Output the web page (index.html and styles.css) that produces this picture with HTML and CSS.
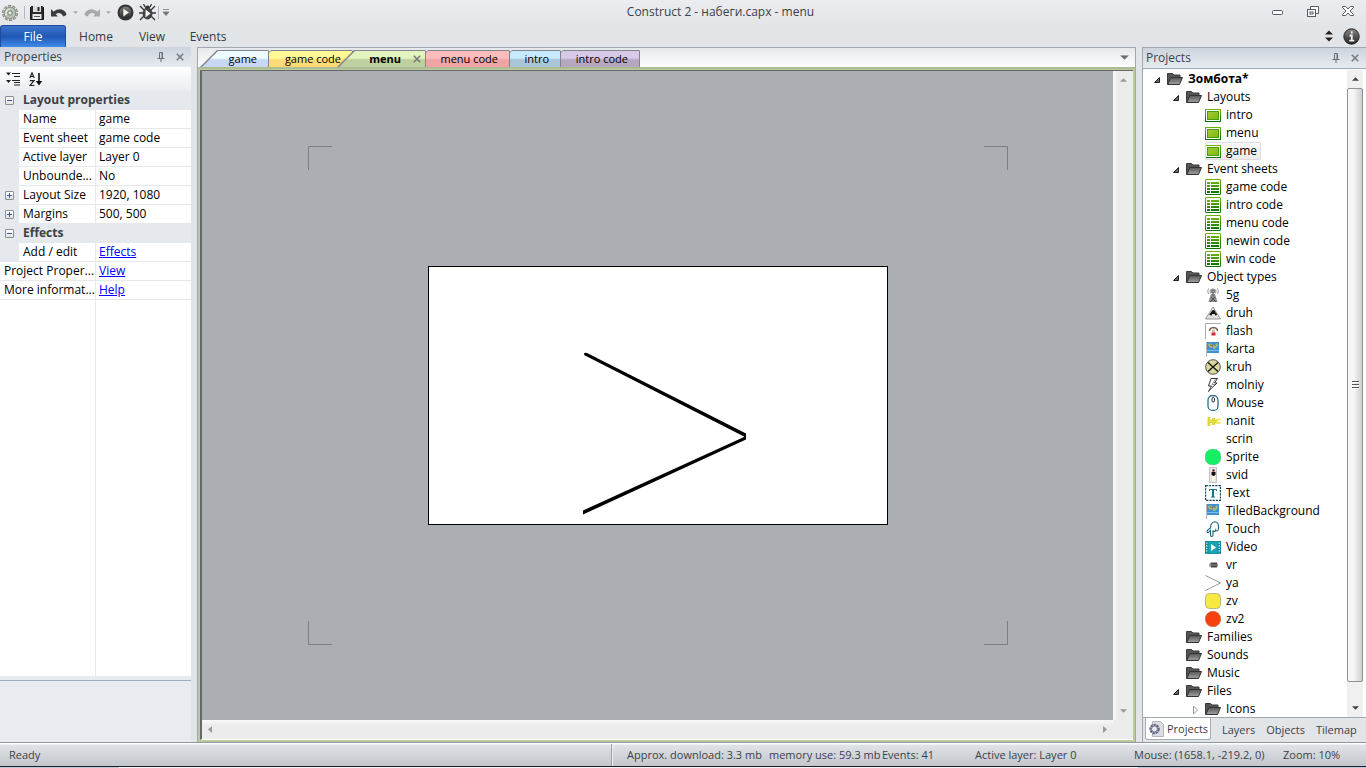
FILE: index.html
```
<!DOCTYPE html>
<html lang="en">
<head>
<meta charset="utf-8">
<title>Construct 2 - набеги.capx - menu</title>
<link rel="stylesheet" href="styles.css">
</head>
<body>
<svg class="defs" aria-hidden="true">
  <defs>
    <linearGradient id="dk" x1="0" y1="0" x2="0" y2="1"><stop offset="0" stop-color="#888"/><stop offset="1" stop-color="#222"/></linearGradient>
    <linearGradient id="gn" x1="0" y1="0" x2="0" y2="1"><stop offset="0" stop-color="#6db00a"/><stop offset="1" stop-color="#087408"/></linearGradient>
    <linearGradient id="lime" x1="0" y1="0" x2="1" y2="1"><stop offset="0" stop-color="#a2cc40"/><stop offset="1" stop-color="#7fb804"/></linearGradient>
    <linearGradient id="fold" x1="0" y1="0" x2="0" y2="1"><stop offset="0" stop-color="#555"/><stop offset="1" stop-color="#a2a2a2"/></linearGradient>
  </defs>
  <symbol id="i-folder" viewBox="0 0 16 16"><path d="M.5 13.500V2.500h5l1.500 1.500h6v2.500" fill="#555" stroke="#3a3a3a"/><path d="M.8 13.500L3.800 6.500H15.500L12.500 13.500z" fill="url(#fold)" stroke="#333"/></symbol>
  <symbol id="i-layout" viewBox="0 0 16 16"><rect x=".5" y="2.500" width="15" height="12" fill="#fff" stroke="url(#gn)"/><rect x="2.500" y="4.500" width="11" height="8" fill="url(#lime)" stroke="#4c9a10"/></symbol>
  <symbol id="i-sheet" viewBox="0 0 16 16"><rect x=".5" y=".5" width="15" height="15" rx=".5" fill="#fff" stroke="url(#gn)"/><path d="M2 3h3v2H2zM6 3h8v2H6zM2 6h3v2H2zM6 6h8v2H6zM2 9h3v2H2zM6 9h8v2H6zM2 12h3v2H2zM6 12h8v2H6z" fill="url(#gn)"/></symbol>
  <symbol id="i-exp" viewBox="0 0 8 10"><path d="M6.500 3.500v5h-5z" fill="#666" stroke="#222"/></symbol>
  <symbol id="i-col" viewBox="0 0 8 10"><path d="M2.500 2l4 4-4 4z" fill="#fff" stroke="#999"/></symbol>
  <symbol id="i-5g" viewBox="0 0 16 16"><path d="M6 7L3.500 15h9L10 7z" fill="#8b8b8b"/><path d="M5 15l5-5M11 15l-5-5" stroke="#555"/><path d="M3.500 1.500q-1.500 3 0 5.500M5.500 2.500q-1 2 0 4M10.500 2.500q1 2 0 4M12.500 1.500q1.500 3 0 5.500" fill="none" stroke="#999"/><circle cx="8" cy="4" r="2.500" fill="#888"/><path d="M8 5v4" stroke="#666"/></symbol>
  <symbol id="i-druh" viewBox="0 0 16 16"><path d="M8 2L15.500 14H.5z" fill="#ddd" stroke="#999"/><path d="M4.500 10q0-2 1.500-2.500Q6.500 5 8.500 5q2 0 2 2.500 1.500.5 1.500 2.500l-2 .5V9H7v1.500z" fill="#111"/></symbol>
  <symbol id="i-flash" viewBox="0 0 16 16"><path d="M.5 16V.5H16" fill="none" stroke="#aaa"/><path d="M4.500 8q0-3 4-3.500Q12.500 5 12.500 8" fill="none" stroke="#75685a" stroke-width="1.500"/><rect x="7" y="6.500" width="3" height="3" fill="#d8bfa5"/><rect x="6.500" y="9.500" width="4" height="3" fill="#e02535"/></symbol>
  <symbol id="i-map" viewBox="0 0 16 16"><path d="M1.500 1v15" stroke="#bbb"/><rect x="2" y="1" width="12" height="11" fill="#3e91cf"/><path d="M2 9.500h12" stroke="#7fbbe8"/><path d="M3 3l3-.5 2 2-1 2.500-3-1zM8 5l4-3 1 2-2 3.500-3 .5z" fill="#a8b777"/><path d="M5 4l3 1M9 3.500l2 1" stroke="#a45c4c"/></symbol>
  <symbol id="i-kruh" viewBox="0 0 16 16"><circle cx="8" cy="8" r="7.300" fill="#dad89c" stroke="#555"/><path d="M3 3.500l10 9M13 3.500l-10 9" stroke="#111" stroke-width="1.300"/></symbol>
  <symbol id="i-bolt" viewBox="0 0 16 16"><path d="M6 1.500h6.500L9.500 6H12L3.500 14.500 6.500 9H3.500z" fill="#fff" stroke="#333"/><path d="M10.500 2L7 7.500h3L4.500 13.500" fill="none" stroke="#777" stroke-width=".8"/></symbol>
  <symbol id="i-mouse" viewBox="0 0 16 16"><rect x="3" y=".6" width="10" height="14.800" rx="4.500" fill="#fff" stroke="#1b6477" stroke-width="1.200"/><rect x="7" y="2.500" width="2.500" height="4.500" rx="1.200" fill="#fff" stroke="#123"/></symbol>
  <symbol id="i-nanit" viewBox="0 0 16 16"><path d="M4 4v9M8.500 5v7M4 8.500h8" stroke="#bdb92e" stroke-width="2.600"/><path d="M4 4v9M8.500 5v7M4 8.500h8M15.500 6.500H12v3.500h3.500" fill="none" stroke="#f0e62a" stroke-width="1.400"/></symbol>
  <symbol id="i-green" viewBox="0 0 16 16"><rect x=".3" y=".3" width="15.400" height="15.400" rx="6.500" fill="#14ef65" stroke="#47c878" stroke-width=".6"/></symbol>
  <symbol id="i-svid" viewBox="0 0 16 16"><rect x="4.500" y=".5" width="7" height="15" fill="#e6e6e6" stroke="#c4c4c4"/><circle cx="8.500" cy="3.500" r="1.300" fill="#722"/><path d="M6.500 5h4v3l-2 1-2-1z" fill="#111"/><rect x="7" y="9" width="3" height="5" fill="#fff3dd"/></symbol>
  <symbol id="i-text" viewBox="0 0 16 16"><rect x=".6" y=".6" width="14.800" height="14.800" fill="#fff" stroke="#14465a" stroke-width="1.200" stroke-dasharray="2.200 1"/><path d="M4.500 6V4.500h7V6" fill="none" stroke="#16788c"/><path d="M8 4v8" stroke="#16788c" stroke-width="2"/><path d="M6 12h4" stroke="#16788c"/></symbol>
  <symbol id="i-touch" viewBox="0 0 16 16"><path d="M5.500 7L6 3.500Q7.500 .8 10 .8q3.500.2 3.500 4.700V8q-.3 2-1.500 2-1 0-1.200-1-.5 1.500-1.500 1.500-1 0-1.300-1V14q-.3 1.500-1.300 1.500-1.200 0-1.200-1.500V9.500L3.500 11.300q-1.500.5-1.500-1 .5-1.800 3.500-3.300z" fill="#fff" stroke="#1b6477" stroke-width="1.100"/></symbol>
  <symbol id="i-video" viewBox="0 0 16 16"><rect y="2" width="16" height="13" fill="#10879a"/><rect x="3.500" y="2.500" width="9" height="12" fill="#1ba3b3"/><path d="M1.700 3.500v11M14.300 3.500v11" stroke="#d5f3f5" stroke-width="1.400" stroke-dasharray="1.300 1.300"/><path d="M6 5l5 3.500L6 12z" fill="#fff"/></symbol>
  <symbol id="i-vr" viewBox="0 0 16 16"><rect x="4" y="5.500" width="9" height="5" rx="2" fill="#aaa"/><path d="M6 6.500h6M5.500 8h7M6 9.500h6" stroke="#333" stroke-width=".9"/><path d="M7 5v6M9 5v6M11 5v6" stroke="#555" stroke-width=".8"/></symbol>
  <symbol id="i-ya" viewBox="0 0 16 16"><path d="M.5 .5L15.500 8 .5 15.500" fill="none" stroke="#999"/></symbol>
  <symbol id="i-zv" viewBox="0 0 16 16"><rect x=".5" y=".5" width="15" height="15" rx="4" fill="#f6ea42" stroke="#bbb687"/></symbol>
  <symbol id="i-zv2" viewBox="0 0 16 16"><circle cx="8" cy="8" r="7.700" fill="#f5410e" stroke="#c85a35" stroke-width=".6"/></symbol>
  <symbol id="i-gear" viewBox="0 0 16 16"><circle cx="8" cy="8" r="6.800" fill="none" stroke="#737c70" stroke-width="2.400" stroke-dasharray="3 1.270"/><circle cx="8" cy="8" r="6.600" fill="none" stroke="#b3bcae" stroke-width="1.400" stroke-dasharray="2.400 1.750"/><circle cx="8" cy="8" r="5.800" fill="#b9c1b3" stroke="#7f887b" stroke-width=".8"/><path d="M4 10.500Q3 5 8 4" fill="none" stroke="#e1e6dc" stroke-width="1.500"/><circle cx="8" cy="8" r="2.200" fill="#e6e8e9" stroke="#737c70"/></symbol>
  <symbol id="i-pin" viewBox="0 0 8 10"><path d="M2.500 6V.5h3V6M.5 6.500h7M4 7v3M5 1v5" fill="none" stroke="#6a6e74"/></symbol>
  <symbol id="i-x" viewBox="0 0 8 8"><path d="M.8 .8l6.400 6.400M7.200 .8L.8 7.200" fill="none" stroke="#777b80" stroke-width="1.600"/></symbol>
  <symbol id="i-up" viewBox="0 0 8 4"><path d="M0 4l4-4 4 4z" fill="currentColor"/></symbol>
  <symbol id="i-down" viewBox="0 0 8 4"><path d="M0 0h8L4 4z" fill="currentColor"/></symbol>
</svg>

<header class="titlebar">
  <div class="quick">
    <svg class="logo" viewBox="0 0 16 16"><use href="#i-gear"/></svg>
    <span class="bar"></span>
    <button class="tool" aria-label="Save"><svg width="16" height="16" viewBox="0 0 16 16"><path d="M1.500 2.500l1-1h11l1 1v12h-13z" fill="#2b2b2b" stroke="#151515"/><rect x="4" y="1" width="8" height="6" fill="#ddd"/><rect x="8.500" y="2" width="2" height="4" fill="#222"/><rect x="3.500" y="9" width="9" height="5" fill="#e8e8e8"/><path d="M5 11.500h6" stroke="#555"/></svg></button>
    <button class="tool undo" aria-label="Undo"><svg width="16" height="12" viewBox="0 0 16 12"><path d="M0 2v7.500h7L4.800 7.300Q9 4 12.500 9.500 16.500 8.500 15 6 10.500-.5 2.500 4.500z" fill="#3c3c3c"/></svg></button>
    <button class="arrow" aria-label="Undo history"><svg width="5" height="3" viewBox="0 0 8 4"><use href="#i-down"/></svg></button>
    <button class="tool redo" aria-label="Redo"><svg width="16" height="12" viewBox="0 0 16 12"><path d="M16 2v7.500H9l2.200-2.200Q7 4 3.500 9.500-.5 8.500 1 6 5.500-.5 13.500 4.500z" fill="#a6a8aa"/></svg></button>
    <button class="arrow" aria-label="Redo history"><svg width="5" height="3" viewBox="0 0 8 4"><use href="#i-down"/></svg></button>
    <button class="tool run" aria-label="Run layout"><svg width="17" height="17" viewBox="0 0 17 17"><circle cx="8.500" cy="8.500" r="7" fill="url(#dk)" stroke="#333" stroke-width="2"/><path d="M6 4L12.500 8.500 6 13z" fill="#f4f4f4" stroke="#333" stroke-width=".5"/></svg></button>
    <button class="tool bug" aria-label="Debug layout"><svg width="17" height="17" viewBox="0 0 17 17"><path d="M1 2l4 4M16 2l-4 4M0 9h4M17 9h-4M1 16l4-4M16 16l-4-4M6 3L4.500 0M11 3l1.500-3" stroke="#333" stroke-width="1.300"/><circle cx="8.500" cy="4" r="2.500" fill="#333"/><ellipse cx="8.500" cy="9.500" rx="5" ry="6" fill="#444"/><path d="M6.500 5.500l5 4-5 4z" fill="#f4f4f4"/></svg></button>
    <span class="bar"></span>
    <button class="arrow more" aria-label="Customize toolbar"><svg width="6" height="7" viewBox="0 0 6 7"><path d="M0 .5h6M0 3h6L3 6.500z" fill="#777" stroke="#777" stroke-width=".8"/></svg></button>
  </div>
  <h1 class="title">Construct 2 - набеги.capx - menu</h1>
  <div class="winctl">
    <button aria-label="Minimize"><svg width="12" height="12" viewBox="0 0 12 12"><rect x=".5" y="4.500" width="10" height="4" rx="1" fill="#fff" stroke="#555a66"/></svg></button>
    <button aria-label="Restore"><svg width="12" height="12" viewBox="0 0 12 12"><path d="M3.500 3.500v-3h8v7h-3" fill="#fff" stroke="#555a66"/><rect x=".5" y="3.500" width="8" height="7" fill="#fff" stroke="#555a66"/><rect x="3" y="6" width="3" height="2" fill="none" stroke="#555a66"/></svg></button>
    <button aria-label="Close"><svg width="12" height="10" viewBox="0 0 12 10"><path d="M.5 .5h3.200L6 3 8.300.5h3.200v1L8 5l3.500 3.500v1H8.300L6 7 3.700 9.500H.5v-1L4 5 .5 1.500z" fill="#fff" stroke="#555a66"/></svg></button>
  </div>
</header>

<nav class="ribbon">
  <button class="file">File</button>
  <button class="rtab">Home</button>
  <button class="rtab">View</button>
  <button class="rtab">Events</button>
  <div class="ribbon-right">
    <button aria-label="Minimize ribbon"><svg width="8" height="12" viewBox="0 0 8 12"><path d="M0 4.500L4 .5l4 4zM0 7.500h8l-4 4z" fill="#222"/></svg></button>
    <button aria-label="About"><svg width="17" height="17" viewBox="0 0 17 17"><circle cx="8.500" cy="8.500" r="7.700" fill="url(#dk)" stroke="#222"/><path d="M8.800 3.300v2.200M6.500 7.500h2.300v5M6.300 12.700h5" fill="none" stroke="#eee" stroke-width="1.800"/></svg></button>
  </div>
</nav>

<main class="workspace">
  <section class="panel props">
    <div class="panel-head"><h2>Properties</h2>
      <button aria-label="Pin"><svg width="8" height="10"><use href="#i-pin"/></svg></button>
      <button aria-label="Close panel"><svg width="8" height="8"><use href="#i-x"/></svg></button></div>
    <div class="props-tools">
      <button aria-label="Categorized"><svg width="15" height="14" viewBox="0 0 15 14"><path d="M0 .5h5L2.500 3.500zM0 8h5l-2.500 3z" fill="#222"/><path d="M6 1.500h8M8 4.500h6M6 8.500h8M8 10.500h6M8 13h6" stroke="#222"/></svg></button>
      <button aria-label="Sort alphabetically"><svg width="14" height="15" viewBox="0 0 14 15"><path d="M.8 6L3 .8 5.200 6M1.500 4.500h3M.8 8.700h4.200L1 13.500h4.500" fill="none" stroke="#222" stroke-width="1.200"/><path d="M10 1v10" stroke="#111" stroke-width="1.600"/><path d="M6.800 9h6.400L10 13.500z" fill="#111"/></svg></button>
    </div>
    <div class="grid-area">
      <table class="grid">
        <colgroup><col class="c-gut"><col class="c-name"><col></colgroup>
        <tr class="cat"><td><button class="box" aria-label="Collapse"></button></td><th colspan="2">Layout properties</th></tr>
        <tr><td></td><th>Name</th><td>game</td></tr>
        <tr><td></td><th>Event sheet</th><td>game code</td></tr>
        <tr><td></td><th>Active layer</th><td>Layer 0</td></tr>
        <tr><td></td><th>Unbounde...</th><td>No</td></tr>
        <tr><td><button class="box plus" aria-label="Expand"></button></td><th>Layout Size</th><td>1920, 1080</td></tr>
        <tr><td><button class="box plus" aria-label="Expand"></button></td><th>Margins</th><td>500, 500</td></tr>
        <tr class="cat"><td><button class="box" aria-label="Collapse"></button></td><th colspan="2">Effects</th></tr>
        <tr><td></td><th>Add / edit</th><td><a href="#">Effects</a></td></tr>
        <tr><th class="wide" colspan="2">Project Proper...</th><td><a href="#">View</a></td></tr>
        <tr><th class="wide" colspan="2">More informat...</th><td><a href="#">Help</a></td></tr>
      </table>
      <div class="grid-rest"></div>
    </div>
    <div class="desc"></div>
  </section>

  <section class="docs">
    <div class="tabs">
      <div class="tab slant t-game"><button>game</button></div>
      <div class="tab t-gcode"><button>game code</button></div>
      <div class="tab slant t-menu"><button>menu</button><button class="close" aria-label="Close tab"><svg width="8" height="8"><use href="#i-x"/></svg></button></div>
      <div class="tab t-mcode"><button>menu code</button></div>
      <div class="tab t-intro"><button>intro</button></div>
      <div class="tab t-icode"><button>intro code</button></div>
      <button class="tablist" aria-label="Tab list"><svg width="9" height="5" viewBox="0 0 8 4"><use href="#i-down"/></svg></button>
    </div>
    <div class="frame">
      <div class="view">
        <div class="canvas">
          <svg width="700" height="499" viewBox="0 0 700 499">
            <path d="M.5 24V.5H24M676 .5h23.500V24M.5 475v23.500H24M676 498.500h23.500V475" fill="none" stroke="#7b7e82"/>
            <rect x="120.500" y="120.500" width="459" height="258" fill="#fff" stroke="#000"/>
            <path d="M278 208.500L437 290.500L276 366.500" fill="none" stroke="none"/>
            <path d="M276 208q.5-2 3-1L438 287.500v6L275 368.500v-4L436 291v-.5L277 209.500q-1-.5-1-1.500z" fill="#000"/>
          </svg>
        </div>
        <div class="sb sb-v"><button aria-label="Scroll up"><svg width="7" height="4"><use href="#i-up"/></svg></button><button aria-label="Scroll down"><svg width="7" height="4"><use href="#i-down"/></svg></button></div>
        <div class="sb sb-h"><button aria-label="Scroll left"><svg width="4" height="7" viewBox="0 0 4 7"><path d="M4 0v7L0 3.500z" fill="currentColor"/></svg></button><button aria-label="Scroll right"><svg width="4" height="7" viewBox="0 0 4 7"><path d="M0 0v7l4-3.500z" fill="currentColor"/></svg></button></div>
        <div class="sb"></div>
      </div>
    </div>
  </section>

  <section class="panel projects">
    <div class="panel-head"><h2>Projects</h2>
      <button aria-label="Pin"><svg width="8" height="10"><use href="#i-pin"/></svg></button>
      <button aria-label="Close panel"><svg width="8" height="8"><use href="#i-x"/></svg></button></div>
    <div class="tree-box">
      <ul class="tree">
        <li><span class="row"><svg class="ex"><use href="#i-exp"/></svg><svg class="ic"><use href="#i-folder"/></svg><b>Зомбота*</b></span>
          <ul>
            <li><span class="row"><svg class="ex"><use href="#i-exp"/></svg><svg class="ic"><use href="#i-folder"/></svg><span>Layouts</span></span>
              <ul>
                <li><span class="row"><svg class="ic"><use href="#i-layout"/></svg><span>intro</span></span></li>
                <li><span class="row"><svg class="ic"><use href="#i-layout"/></svg><span>menu</span></span></li>
                <li><span class="row sel"><svg class="ic"><use href="#i-layout"/></svg><span>game</span></span></li>
              </ul></li>
            <li><span class="row"><svg class="ex"><use href="#i-exp"/></svg><svg class="ic"><use href="#i-folder"/></svg><span>Event sheets</span></span>
              <ul>
                <li><span class="row"><svg class="ic"><use href="#i-sheet"/></svg><span>game code</span></span></li>
                <li><span class="row"><svg class="ic"><use href="#i-sheet"/></svg><span>intro code</span></span></li>
                <li><span class="row"><svg class="ic"><use href="#i-sheet"/></svg><span>menu code</span></span></li>
                <li><span class="row"><svg class="ic"><use href="#i-sheet"/></svg><span>newin code</span></span></li>
                <li><span class="row"><svg class="ic"><use href="#i-sheet"/></svg><span>win code</span></span></li>
              </ul></li>
            <li><span class="row"><svg class="ex"><use href="#i-exp"/></svg><svg class="ic"><use href="#i-folder"/></svg><span>Object types</span></span>
              <ul>
                <li><span class="row"><svg class="ic"><use href="#i-5g"/></svg><span>5g</span></span></li>
                <li><span class="row"><svg class="ic"><use href="#i-druh"/></svg><span>druh</span></span></li>
                <li><span class="row"><svg class="ic"><use href="#i-flash"/></svg><span>flash</span></span></li>
                <li><span class="row"><svg class="ic"><use href="#i-map"/></svg><span>karta</span></span></li>
                <li><span class="row"><svg class="ic"><use href="#i-kruh"/></svg><span>kruh</span></span></li>
                <li><span class="row"><svg class="ic"><use href="#i-bolt"/></svg><span>molniy</span></span></li>
                <li><span class="row"><svg class="ic"><use href="#i-mouse"/></svg><span>Mouse</span></span></li>
                <li><span class="row"><svg class="ic"><use href="#i-nanit"/></svg><span>nanit</span></span></li>
                <li><span class="row"><svg class="ic"></svg><span>scrin</span></span></li>
                <li><span class="row"><svg class="ic"><use href="#i-green"/></svg><span>Sprite</span></span></li>
                <li><span class="row"><svg class="ic"><use href="#i-svid"/></svg><span>svid</span></span></li>
                <li><span class="row"><svg class="ic"><use href="#i-text"/></svg><span>Text</span></span></li>
                <li><span class="row"><svg class="ic"><use href="#i-map"/></svg><span>TiledBackground</span></span></li>
                <li><span class="row"><svg class="ic"><use href="#i-touch"/></svg><span>Touch</span></span></li>
                <li><span class="row"><svg class="ic"><use href="#i-video"/></svg><span>Video</span></span></li>
                <li><span class="row"><svg class="ic"><use href="#i-vr"/></svg><span>vr</span></span></li>
                <li><span class="row"><svg class="ic"><use href="#i-ya"/></svg><span>ya</span></span></li>
                <li><span class="row"><svg class="ic"><use href="#i-zv"/></svg><span>zv</span></span></li>
                <li><span class="row"><svg class="ic"><use href="#i-zv2"/></svg><span>zv2</span></span></li>
              </ul></li>
            <li><span class="row"><svg class="ex"></svg><svg class="ic"><use href="#i-folder"/></svg><span>Families</span></span></li>
            <li><span class="row"><svg class="ex"></svg><svg class="ic"><use href="#i-folder"/></svg><span>Sounds</span></span></li>
            <li><span class="row"><svg class="ex"></svg><svg class="ic"><use href="#i-folder"/></svg><span>Music</span></span></li>
            <li><span class="row"><svg class="ex"><use href="#i-exp"/></svg><svg class="ic"><use href="#i-folder"/></svg><span>Files</span></span>
              <ul class="files"><li><span class="row"><svg class="ex"><use href="#i-col"/></svg><svg class="ic"><use href="#i-folder"/></svg><span>Icons</span></span></li></ul></li>
          </ul></li>
      </ul>
      <div class="tree-sb">
        <button aria-label="Scroll up"><svg width="7" height="4"><use href="#i-up"/></svg></button>
        <div class="thumb"><i></i><i></i><i></i></div>
        <button aria-label="Scroll down"><svg width="7" height="4"><use href="#i-down"/></svg></button>
      </div>
    </div>
    <div class="ptabs">
      <button class="on"><svg width="16" height="16" viewBox="0 0 16 16"><path d="M4.500 .5h8l3 3v12h-11z" fill="#dcdde4" stroke="#b5b5bd"/><circle cx="6.500" cy="8" r="4" fill="#e9e9f2" stroke="#62647e" stroke-width="2.500" stroke-dasharray="2.200 .7"/><circle cx="6.500" cy="8" r="3" fill="none" stroke="#80829c"/></svg>Projects</button>
      <button>Layers</button><button>Objects</button><button>Tilemap</button>
    </div>
  </section>
</main>

<footer class="status">
  <span class="ready">Ready</span>
  <div class="stats"><span class="s1">Approx. download: 3.3 mb</span><span class="s2">memory use: 59.3 mb</span><span class="s3">Events: 41</span><span class="s4">Active layer: Layer 0</span><span class="s5">Mouse: (1658.1, -219.2, 0)</span><span>Zoom: 10%</span></div>
</footer>
<div class="edge"></div>
</body>
</html>
```
FILE: styles.css
```
* { box-sizing: border-box; }
body {
  margin: 0;
  height: 100vh;
  display: flex;
  flex-direction: column;
  overflow: hidden;
  background: #e1e5e8;
  color: #000;
  font: 12px/18px "Open Sans", "Noto Sans", sans-serif;
  white-space: nowrap;
}
button { margin: 0; padding: 0; border: 0; background: none; color: inherit; font: inherit; }
svg { display: block; flex: none; }
.defs { position: absolute; width: 0; height: 0; }
h1, h2 { margin: 0; font: inherit; }

/* Title bar */
.titlebar { height: 25px; display: flex; align-items: center; background: linear-gradient(#ebecef, #e3e6e9); color: #3b3f48; }
.quick { display: flex; align-items: center; padding-left: 2px; height: 22px; }
.logo { width: 16px; height: 16px; }
.bar { width: 1px; height: 13px; margin: 0 4px 0 6px; background: #b4b8bc; }
.tool { display: flex; }
.undo, .redo { margin-left: 6px; }
.arrow { margin-left: 6px; color: #9a9da1; }
.run { margin-left: 6px; }
.bug { margin-left: 5px; }
.bug + .bar { margin: 0 0 0 2px; }
.more { margin-left: 4px; }
.title { flex: 1; text-align: center; line-height: 20px; height: 22px; }
.winctl { display: flex; gap: 23px; padding-right: 12px; height: 22px; align-items: flex-start; padding-top: 4px; }

/* Ribbon */
.ribbon { height: 22px; display: flex; align-items: stretch; color: #35383e; }
.file { width: 66px; border-radius: 3px 3px 0 0; border: 1px solid #1f4c9c; border-bottom: 0; background: linear-gradient(#3c74cd, #2158b4 50%, #3f8aea); color: #fff; }
.rtab { margin-left: 15px; width: 30px; display: flex; align-items: center; justify-content: center; padding-top: 2px; }
.rtab + .rtab { margin-left: 26px; }
.ribbon-right { margin-left: auto; display: flex; align-items: center; gap: 10px; padding-right: 6px; }

/* Workspace */
.workspace { flex: 1; min-height: 0; display: grid; grid-template-columns: 191px minmax(0, 1fr) 224px; gap: 6px; }
.panel { display: flex; flex-direction: column; min-height: 0; }
.panel-head { height: 20px; display: flex; align-items: center; padding: 0 7px 0 4px; background: linear-gradient(#cdd4dc, #e6ebf0); color: #3b4350; }
.panel-head h2 { flex: 1; }
.panel-head button + button { margin-left: 11px; }
.props-tools { height: 24px; display: flex; align-items: center; gap: 8px; padding-left: 6px; background: linear-gradient(#fff, #e9ecf1); }
.grid-area { flex: 1; min-height: 0; display: flex; flex-direction: column; }
.grid { width: 100%; table-layout: fixed; border-collapse: separate; border-spacing: 0; }
.c-gut { width: 19px; }
.c-name { width: 77px; }
.grid tr { height: 19px; }
.grid td, .grid th { padding: 0 3px 0 4px; line-height: 18px; font-weight: normal; text-align: left; background: #fff; border-bottom: 1px solid #e5e8ed; }
.grid td:last-child { padding-left: 3px; }
.grid th { border-right: 1px solid #e5e8ed; }
.grid td:first-child { background: #e5e8ed; padding-left: 5px; }
.grid .cat th { font-weight: bold; background: #e5e8ed; color: #3c3f45; }
.grid a { color: #00f; }
.box { position: relative; display: block; width: 9px; height: 9px; border: 1px solid #8b9097; border-radius: 1px; background: linear-gradient(#fff, #e2e2e2); }
.box::before, .plus::after { content: ""; position: absolute; left: 1px; top: 3px; width: 5px; height: 1px; background: #3c5a9c; }
.plus::after { left: 3px; top: 1px; width: 1px; height: 5px; }
.grid-rest { flex: 1; background: linear-gradient(#e5e8ed, #e5e8ed) 95px 0 / 1px 100% no-repeat #fff; }
.desc { height: 66px; border-top: 4px solid #e8ebf0; background: #e8ebf0; box-shadow: inset 0 1px #a0acba; }

/* Document area */
.docs { display: flex; flex-direction: column; min-width: 0; border: 1px solid #9fa7b0; border-bottom: 0; }
.tabs { height: 19px; display: flex; align-items: flex-end; padding-left: 2px; background: linear-gradient(#e6e9ec, #fdfdfd); font-size: 11px; }
.tab { --fill: #fff; position: relative; z-index: 0; height: 17px; width: 84px; display: flex; align-items: center; justify-content: flex-end; padding-right: 12px; background: #80848b; clip-path: polygon(0 2px, 2px 0, calc(100% - 1px) 0, 100% 1px, 100% 100%, 0 100%); }
.tab::before { content: ""; position: absolute; z-index: -1; inset: 1px 1px 0 0; background: var(--fill); clip-path: polygon(0 2px, 2px 0, 100% 0, 100% 100%, 0 100%); }
.tab.slant { clip-path: polygon(0 100%, 17px 0, calc(100% - 1px) 0, 100% 1px, 100% 100%); }
.tab.slant::before { clip-path: polygon(2px 100%, 18px 0, 100% 0, 100% 100%); }
.t-game { --fill: linear-gradient(#effcff 45%, #c8d8f4 55%); width: 69px; }
.t-gcode { --fill: linear-gradient(#fff995 45%, #ffda75 55%); }
.t-menu { --fill: linear-gradient(#e2f3bd 45%, #bfd0a0 55%); width: 89px; margin-left: -16px; padding-right: 5px; gap: 12px; font-weight: bold; z-index: 1; }
.t-mcode { --fill: linear-gradient(#fdbcbc 45%, #f1a2a2 55%); }
.t-intro { --fill: linear-gradient(#c8eaff 45%, #a9c5d8 55%); width: 51px; }
.t-icode { --fill: linear-gradient(#d8c9e6 45%, #b5a7c0 55%); width: 79px; }
.tablist { margin: 0 6px 0 auto; align-self: center; color: #6b6e73; }
.frame { flex: 1; min-height: 0; padding: 1px; border: 1px solid #bccb9b; border-width: 2px 1px 1px; border-top-color: #aebc94; background: #bccb9b; }
.view { height: 100%; display: grid; grid-template: minmax(0, 1fr) 19px / minmax(0, 1fr) 20px; border: 1px solid #66686c; border-left-width: 2px; border-right: 0; border-bottom-color: #fff; }
.canvas { display: flex; align-items: center; justify-content: center; overflow: hidden; background: #abaeb3; }
.sb { display: flex; align-items: center; justify-content: space-between; background: #ececec; color: #999; }
.sb-v { flex-direction: column; padding: 7px 0; background: linear-gradient(90deg, #f8f8f8, #ebebeb 30%, #ececec); }
.sb-h { padding: 0 6px; background: linear-gradient(#f8f8f8, #ebebeb 30%, #ececec); }

/* Projects */
.projects { border-left: 1px solid #9fa7b0; }
.projects .panel-head { border-top: 1px solid #9fa7b0; height: 21px; padding-left: 3px; }
.tree-box { flex: 1; min-height: 0; display: flex; background: #fff; border: 1px solid #9fa7b0; border-width: 1px 0; padding: 1px 3px 0 1px; }
.tree { flex: 1; overflow: hidden; }
.tree, .tree ul { margin: 0; padding: 0; list-style: none; }
.tree { padding-left: 9px; }
.tree ul { padding-left: 19px; }
.row { height: 18px; display: flex; align-items: center; }
.row > :last-child { padding-left: 5px; }
.ex { width: 8px; height: 10px; margin-right: 6px; }
.ic { width: 16px; height: 16px; }
.tree ul ul { padding-left: 33px; }
.tree ul .files { padding-left: 19px; }
.sel { width: 56px; outline: 1px solid #ddd; border-radius: 2px; outline-offset: -1px; background: linear-gradient(#fafafa, #ebebeb); }
.tree-sb { width: 16px; display: flex; flex-direction: column; align-items: stretch; background: #f0f0f0; color: #444; }
.tree-sb button { height: 18px; display: flex; align-items: center; justify-content: center; }
.thumb { height: 594px; border: 1px solid #8f9195; border-radius: 2px; background: linear-gradient(90deg, #f6f6f6 40%, #cdcdcf); display: flex; flex-direction: column; align-items: center; justify-content: center; gap: 1px; }
.tree-sb button:last-child { margin-top: auto; }
.thumb i { width: 7px; height: 2px; background: #555; border-bottom: 1px solid #fff; }
.ptabs { height: 24px; display: flex; align-items: flex-start; gap: 11px; padding-left: 2px; color: #3b3f48; font-size: 11px; }
.ptabs button { height: 22px; padding-top: 2px; }
.ptabs .on { width: 66px; display: flex; align-items: center; gap: 3px; padding: 0 0 0 2px; background: #fff; border: 1px solid #a8aeb6; border-top: 0; border-radius: 0 0 3px 3px; }

/* Status */
.status { height: 24px; display: flex; align-items: center; border-top: 1px solid #8f98a3; background: linear-gradient(#fff 1px, #dfe3e7 2px, #c3c7cc); color: #3b3f48; font-size: 11px; }
.ready { flex: 1; padding-left: 9px; }
.stats { width: 755px; height: 22px; display: flex; align-items: center; padding-left: 15px; border-left: 1px solid #999fa6; box-shadow: inset 1px 0 #eef0f2; }
.s1 { width: 142px; }
.s2 { width: 113px; }
.s3 { width: 93px; }
.s4 { width: 159px; }
.s5 { width: 149px; }
.edge { height: 2px; border-top: 1px solid #1c2026; background: linear-gradient(90deg, #b9cbdc 119px, #f4f5f6 119px 1138px, #b9cbdc 1138px); }
```
